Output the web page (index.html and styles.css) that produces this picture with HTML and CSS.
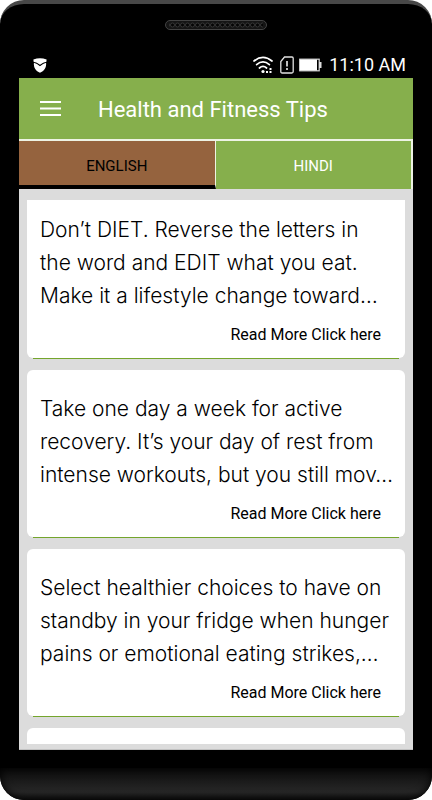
FILE: index.html
```html
<!DOCTYPE html>
<html lang="en">
<head>
<meta charset="utf-8">
<meta name="viewport" content="width=device-width, initial-scale=1">
<title>Health and Fitness Tips</title>
<link rel="stylesheet" href="styles.css">
</head>
<body>
<div class="phone">
  <div class="speaker-row">
    <svg class="speaker" width="102" height="10" viewBox="0 0 102 10" aria-hidden="true">
      <defs>
        <pattern id="mesh" width="5" height="10" patternUnits="userSpaceOnUse">
          <circle cx="2.5" cy="5" r="2" fill="#050505" stroke="#3c3c3c" stroke-width=".8"/>
        </pattern>
      </defs>
      <rect x=".5" y=".5" width="101" height="9" rx="4.5" fill="#151515" stroke="#444"/>
      <rect x="4" y="2" width="94" height="6" fill="url(#mesh)"/>
    </svg>
  </div>
  <div class="status">
    <svg class="shield" width="14" height="15" viewBox="0 0 14 15" aria-hidden="true">
      <path d="M.4 1.600Q7-1 13.600 1.600L13.400 3.800Q10 4.500 7 6.800 4 4.500.6 3.800Z" fill="#fff"/>
      <path d="M.9 4.800Q4 5.600 7 8.300 10 5.600 13.100 4.800C13.600 10 11 13.200 7 14.800 3 13.200.4 10 .9 4.800Z" fill="#fff"/>
    </svg>
    <div class="status-right">
      <svg width="20" height="18" viewBox="0 0 20 18" fill="none" aria-hidden="true">
        <g stroke="#fff" stroke-width="1.700" stroke-linecap="round">
          <path d="M1 5Q10-2.200 19 5"/>
          <path d="M3.600 8.600Q10 3.200 16.400 8.600"/>
          <path d="M6.400 12Q10 8.800 13.600 12"/>
        </g>
        <g fill="#fff"><circle cx="10" cy="15.500" r="1.600"/><rect x="13" y="15" width="2" height="2"/><rect x="16.500" y="12" width="2" height="2"/><rect x="16.500" y="15" width="2" height="2"/></g>
      </svg>
      <svg width="14" height="18" viewBox="0 0 14 18" fill="none" aria-hidden="true">
        <path d="M4.500 1H12q1.200 0 1.200 1.200V15.500Q13.200 17 11.800 17H2.200Q.8 17 .8 15.500V5.500Z" stroke="#e2e2e2" stroke-width="1.300"/>
        <path d="M7 5v5.500M7 12v2" stroke="#fff" stroke-width="1.500"/>
      </svg>
      <svg width="23" height="14" viewBox="0 0 23 14" aria-hidden="true">
        <rect x=".7" y="1.200" width="19.500" height="11.600" fill="#000" stroke="#ddd" stroke-width="1.200"/>
        <rect x="1" y="1.500" width="17" height="11" fill="#fff"/>
        <path d="M20 4h2.500v6H20Z" fill="#ddd"/>
      </svg>
      <span class="clock">11:10 AM</span>
    </div>
  </div>

  <main class="screen">
    <header class="appbar">
      <button class="menu" type="button" aria-label="Menu">
        <svg width="21" height="15" viewBox="0 0 21 15" aria-hidden="true"><path d="M0 1h21M0 7.500h21M0 14h21" stroke="#fff" stroke-width="2"/></svg>
      </button>
      <h1>Health and Fitness Tips</h1>
    </header>
    <nav class="tabs">
      <button class="tab active" type="button">ENGLISH</button>
      <button class="tab" type="button">HINDI</button>
    </nav>
    <div class="list">
      <article class="card first">
        <p>Don’t DIET. Reverse the letters in<br>the word and EDIT what you eat.<br>Make it a lifestyle change toward…</p>
        <a href="#tip1">Read More Click here</a>
      </article>
      <article class="card">
        <p>Take one day a week for active<br>recovery. It’s your day of rest from<br>intense workouts, but you still mov…</p>
        <a href="#tip2">Read More Click here</a>
      </article>
      <article class="card">
        <p>Select healthier choices to have on<br>standby in your fridge when hunger<br>pains or emotional eating strikes,…</p>
        <a href="#tip3">Read More Click here</a>
      </article>
      <article class="card last"></article>
    </div>
  </main>
  <div class="chin"></div>
</div>
</body>
</html>
```
FILE: styles.css
```css
* { box-sizing: border-box; }
body {
  margin: 0;
  background: #fff;
  font-family: Roboto, "Liberation Sans", sans-serif;
}
.phone {
  display: flex;
  flex-direction: column;
  height: 100vh;
  min-height: 480px;
  background: #000;
  border-top: 4px solid #484848;
  border-radius: 24px;
  overflow: hidden;
}
.speaker-row {
  display: flex;
  justify-content: center;
  padding-top: 16px;
  height: 48px;
}
.status {
  display: flex;
  align-items: center;
  justify-content: space-between;
  height: 26px;
  padding: 0 26px 0 33px;
}
.status-right {
  display: flex;
  align-items: center;
  gap: 7px;
}
.status-right svg + svg + svg { margin-left: -2px; }
.clock {
  color: #fff;
  font-size: 18px;
  line-height: 26px;
}
.screen {
  flex: 1;
  min-height: 0;
  display: flex;
  flex-direction: column;
  margin: 0 19px 18px;
  background: #dcdcdc;
  border-bottom: 1px solid #c2c2c2;
}
.appbar {
  display: flex;
  align-items: center;
  height: 61px;
  flex: none;
  padding: 2px 0 0 21px;
  background: #86af4c;
}
.menu {
  display: flex;
  padding: 0;
  border: 0;
  background: none;
}
.menu svg { margin-bottom: 2px; }
h1 {
  margin: 0 0 0 37px;
  color: #fff;
  font-size: 22px;
  font-weight: 400;
  line-height: 28px;
}
.tabs {
  display: flex;
  flex: none;
  height: 50px;
  border-top: 2px solid #eef3e4;
  border-right: 2px solid #eef3e4;
}
.tab {
  flex: 1;
  padding: 2px 0 0;
  border: 0;
  background: #86af4c;
  color: #fff;
  font: 400 15px/20px Roboto, sans-serif;
}
.tab.active {
  padding-top: 6px;
  border-right: 1px solid #eef3e4;
  border-bottom: 4px solid #000;
  background: #95633e;
  color: #000;
}
.list {
  flex: 1;
  min-height: 0;
  display: flex;
  flex-direction: column;
  gap: 12px;
  margin: 11px 8px 5px;
  overflow: hidden;
}
.card {
  flex: none;
  display: flex;
  flex-direction: column;
  padding: 22px 13px 11px;
  background: #fff;
  border-radius: 6px;
}
.card:not(.last)::after {
  content: "";
  height: 1px;
  margin: 0 -7px -12px;
  background: #74a52c;
}
.card.first {
  padding-top: 13px;
  border-radius: 0 0 6px 6px;
}
.card p {
  margin: 0 0 11px;
  color: #000;
  font-family: Inter, "Liberation Sans", sans-serif;
  font-size: 21px;
  font-weight: 300;
  line-height: 33px;
  white-space: nowrap;
}
.card a {
  align-self: flex-end;
  margin: 0 11px 11px 0;
  color: #000;
  font-size: 16px;
  line-height: 24px;
  text-decoration: none;
}
.card.last {
  flex: 1;
  min-height: 0;
  padding: 0;
  border-radius: 6px 6px 0 0;
}
.chin {
  flex: none;
  height: 32px;
  background: linear-gradient(#0b0b0b, #272727 75%, #111);
  border-radius: 0 0 24px 24px;
  box-shadow: inset 0 0 10px #000;
}
```
